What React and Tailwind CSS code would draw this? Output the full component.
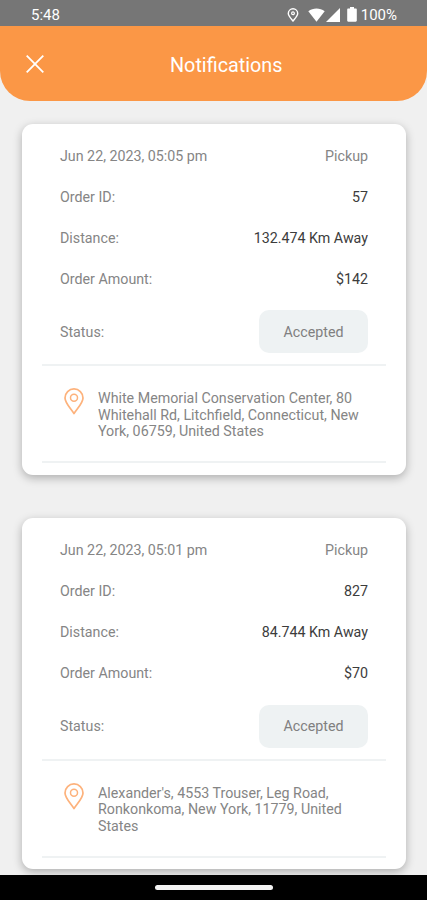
import React from 'react';

const notifications = [
  {
    id: '57',
    date: 'Jun 22, 2023, 05:05 pm',
    type: 'Pickup',
    distance: '132.474 Km Away',
    amount: '$142',
    status: 'Accepted',
    address: ['White Memorial Conservation Center, 80', 'Whitehall Rd, Litchfield, Connecticut, New', 'York, 06759, United States'],
  },
  {
    id: '827',
    date: 'Jun 22, 2023, 05:01 pm',
    type: 'Pickup',
    distance: '84.744 Km Away',
    amount: '$70',
    status: 'Accepted',
    address: ["Alexander's, 4553 Trouser, Leg Road,", 'Ronkonkoma, New York, 11779, United', 'States'],
  },
];

function StatusBar() {
  return (
    <div className="flex h-[26px] shrink-0 items-center bg-[#767676] pt-[3px] pr-[30px] pl-[31px] text-[15px] text-white">
      <span className="pt-[2px]">5:48</span>
      <div className="ml-auto flex items-center">
        <svg className="mr-[9px] h-[14px] w-3" viewBox="0 0 12 14" fill="none" stroke="currentColor">
          <path strokeWidth="1.4" d="M6 13C3.5 10 1.3 7.8 1.3 5.5a4.7 4.7 0 0 1 9.4 0C10.7 7.8 8.5 10 6 13z" />
          <circle cx="6" cy="5.3" r="1.4" strokeWidth="1.2" />
        </svg>
        <svg className="mr-px h-[14px] w-[17px]" viewBox="0 0 17 14" fill="currentColor">
          <path d="M.3 3.2C5-.4 12-.4 16.7 3.2L8.5 13.8z" />
        </svg>
        <svg className="mr-[7px] h-[14px] w-[14px]" viewBox="0 0 14 14" fill="currentColor">
          <path d="M14 0v14H0z" />
        </svg>
        <svg className="mr-[4px] h-[15px] w-[10px]" viewBox="0 0 10 15" fill="currentColor">
          <path d="M3 0h4v1.5h1.7c.7 0 1.1.4 1.1 1.1v11c0 .7-.4 1.1-1.1 1.1H1.3c-.7 0-1.1-.4-1.1-1.1v-11c0-.7.4-1.1 1.1-1.1H3z" />
        </svg>
        <span className="pt-[2px]">100%</span>
      </div>
    </div>
  );
}

function Row({ label, children }) {
  return (
    <div className="flex h-[41px] items-center justify-between pt-[1.5px]">
      <span className="text-[#858585]">{label}</span>
      {children}
    </div>
  );
}

function NotificationCard({ item }) {
  return (
    <div className="h-[351px] rounded-[11px] bg-white px-5 pt-[11.5px] text-[14.25px] shadow-[0_3px_10px_rgba(0,0,0,0.28)]">
      <div className="pr-[17.5px] pl-[18.5px]">
        <Row label={item.date}>
          <span className="text-[#858585]">{item.type}</span>
        </Row>
        <Row label="Order ID:">
          <span className="text-[#3c3c3c]">{item.id}</span>
        </Row>
        <Row label="Distance:">
          <span className="text-[#3c3c3c]">{item.distance}</span>
        </Row>
        <Row label="Order Amount:">
          <span className="text-[#3c3c3c]">{item.amount}</span>
        </Row>
        <div className="flex h-[65px] items-center justify-between">
          <span className="pt-[2px] text-[#858585]">Status:</span>
          <span className="flex h-[43px] w-[109px] items-center justify-center rounded-[10px] bg-[#eef2f3] pt-[2px] text-[#808080]">
            {item.status}
          </span>
        </div>
      </div>

      {/* Address */}
      <div className="flex h-[99px] border-y-2 border-[#eff2f3] pt-[22px] pl-[22px]">
        <svg className="mr-[14.5px] h-[27px] w-5 shrink-0" viewBox="0 0 20 27" fill="none" stroke="#fdb27c">
          <path strokeWidth="1.7" strokeLinejoin="round" d="M10 25.5C6.5 20 1 14.8 1 9.9a9 9 0 0 1 18 0C19 14.8 13.5 20 10 25.5z" />
          <circle cx="10" cy="9.8" r="3.5" strokeWidth="1.5" />
        </svg>
        <p className="pt-[2px] leading-[16.7px] whitespace-nowrap text-[#858585]">
          {item.address.map((line) => (
            <span key={line} className="block">{line}</span>
          ))}
        </p>
      </div>
    </div>
  );
}

export default function App() {
  return (
    <div className="flex h-[900px] w-[427px] flex-col overflow-hidden bg-[#f0f0f0] font-['Roboto',sans-serif]">
      <StatusBar />
      <header className="flex h-[75px] shrink-0 items-center rounded-b-[30px] bg-[#fb9746] pt-px pr-[18px] pl-[26px] text-white">
        <button aria-label="Close" className="h-[18px] w-[18px]">
          <svg className="block h-[18px] w-[18px]" viewBox="0 0 18 18" fill="none" stroke="currentColor" strokeWidth="1.8">
            <path d="M.7.7l16.6 16.6M17.3.7L.7 17.3" />
          </svg>
        </button>
        <h1 className="ml-[126px] pt-[3px] text-[19.8px]">Notifications</h1>
      </header>

      <main className="flex min-h-0 flex-1 flex-col gap-[43.5px] overflow-hidden px-[21.5px] pt-[22.5px]">
        {notifications.map((item) => (
          <NotificationCard key={item.id} item={item} />
        ))}
      </main>

      <footer className="flex h-[25px] shrink-0 items-center justify-center bg-black">
        <div className="h-[5px] w-[118px] rounded-full bg-[#f3f3f3]"></div>
      </footer>
    </div>
  );
}
